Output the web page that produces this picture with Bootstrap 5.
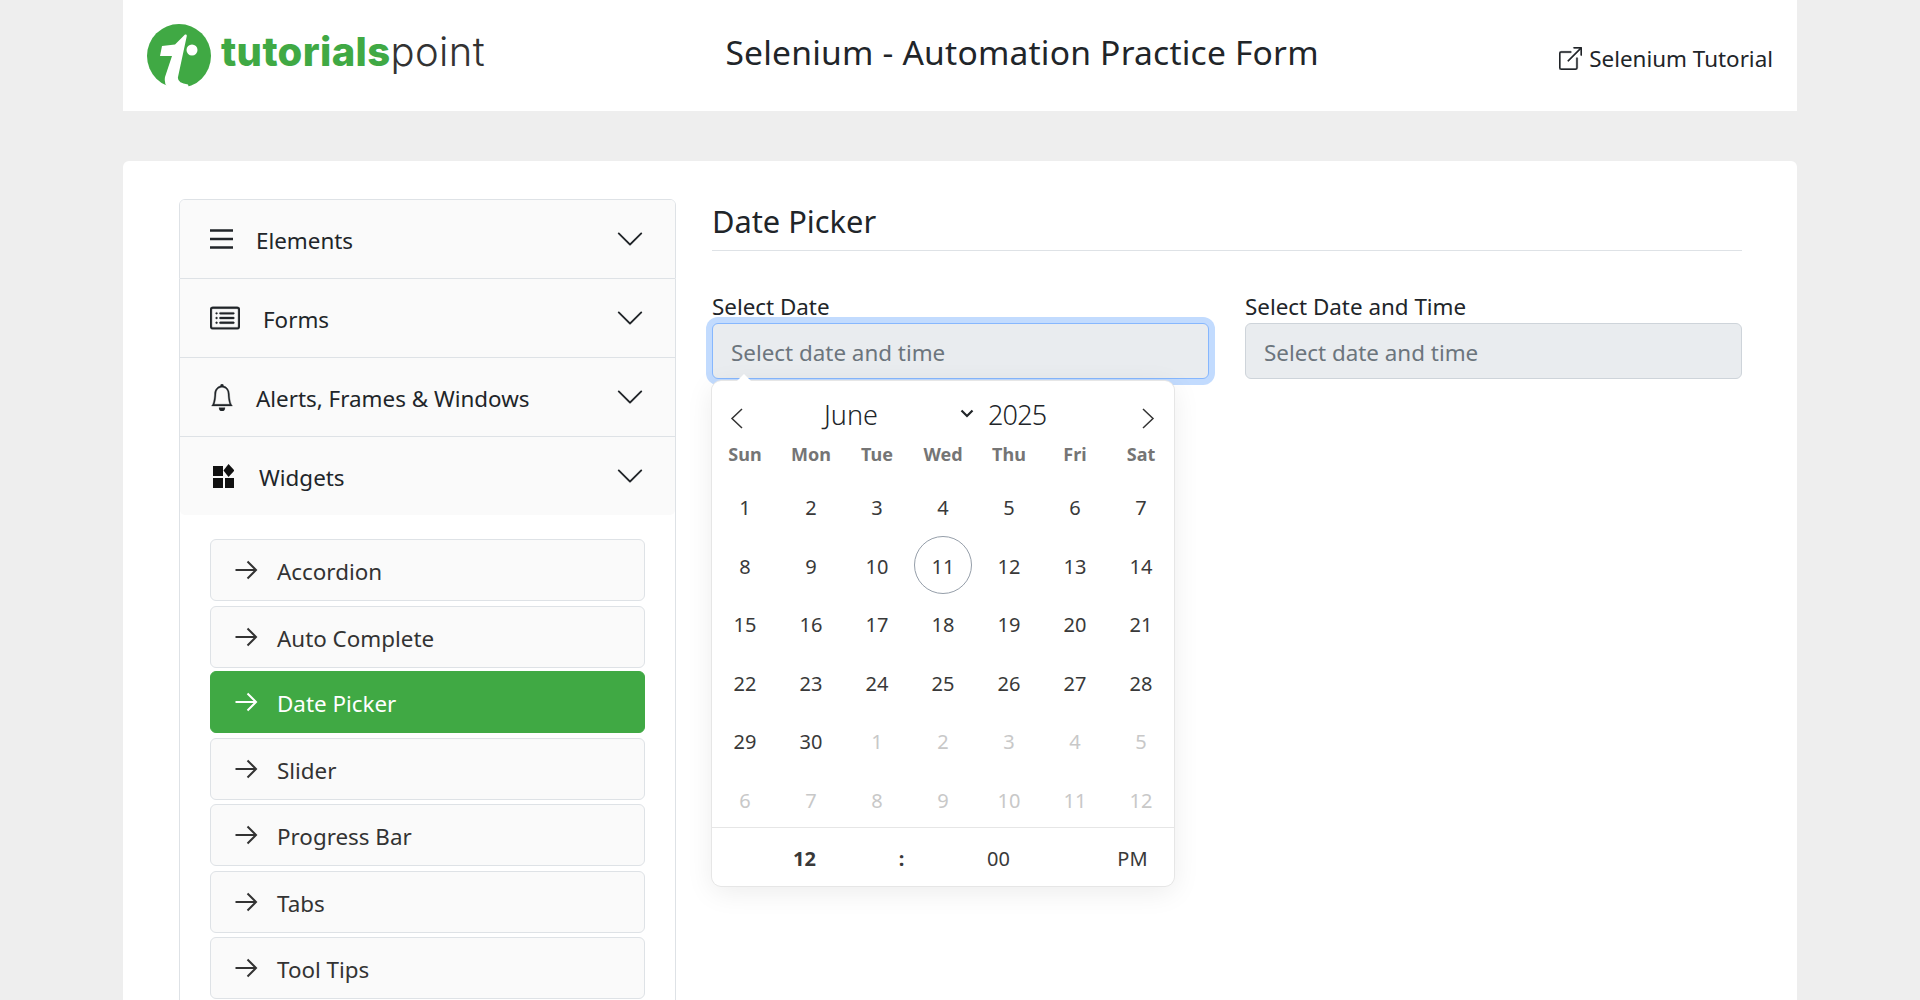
<!doctype html>
<html lang="en"><head><meta charset="utf-8"><title>Selenium - Automation Practice Form</title>
<link href="https://cdn.jsdelivr.net/npm/bootstrap@5.3.0/dist/css/bootstrap.min.css" rel="stylesheet">
<style>
html,body{height:100%;overflow:hidden}
body{background:#eee;font-family:"Noto Sans","Open Sans",sans-serif;color:#212529;font-size:20px}
.shell{width:1674px;margin:0 auto}
.topbar{height:111px;background:#fff;padding:0 24px}
.logo-wrap{gap:10px;height:111px}
.logo-text{font-family:Inter,sans-serif;font-size:40px;line-height:1;letter-spacing:.35px;padding-bottom:8px}
.logo-a{color:#40a944;font-weight:800}.logo-b{color:#333;font-weight:300}
.page-title{font-size:33.6px;margin:0 0 7px;font-weight:400;letter-spacing:.2px}
.ext-link{color:#212529;text-decoration:none;font-size:22.4px;gap:7px;margin-top:6px}
.ext-link svg{stroke:currentColor;stroke-width:.25}
.panel{margin-top:50px;background:#fff;border:0;border-radius:6px 6px 0 0;padding:38px 55px 0 56px;height:839px;overflow:hidden}
.panel-row{--bs-gutter-x:36px}
.side-acc{--bs-accordion-btn-bg:#fafafa;--bs-accordion-active-bg:#fafafa;--bs-accordion-btn-icon-width:30px;--bs-accordion-border-color:#dee2e6;--bs-accordion-border-radius:6px;--bs-accordion-inner-border-radius:5px;--bs-accordion-btn-padding-x:30px;--bs-accordion-btn-padding-y:0;--bs-accordion-body-padding-x:30px;--bs-accordion-body-padding-y:24px}
.side-acc .accordion-button{height:78px;font-size:22.4px;color:#212529;padding-left:30px;box-shadow:none}
.acc-label{padding-top:5px}
.ic-wrap{display:inline-flex;align-items:center}
.ic-wrap svg{stroke:#212529;stroke-width:.2}
.ic-wrap svg.ham{stroke-width:2.4}
.m-el{margin-right:23px}.m-fo{margin-right:23px}.m-wi{margin-right:25px}.m-al{margin-right:22px}
.m-wi svg{stroke:none}
.sub-list{gap:4.5px}
.sub-list .list-group-item{height:62px;background:#fafafa;border:1px solid #dee2e6;border-radius:6px;color:#333;font-size:22.4px;display:flex;align-items:center;padding:4px 0 0 23px;margin:0}
.sub-list .list-group-item.active{background:#40a944;border-color:#40a944;color:#fff}
.sub-list svg{margin:-4px 19px 0 0;flex:none;fill:none;stroke:currentColor;stroke-width:2}
.sec-title{font-size:30.8px;font-weight:400;margin:0;height:51px;line-height:44px}
.sec-rule{height:1px;background:#dee2e6;margin-bottom:43px}
.fld-label{font-size:22.4px;line-height:30px;margin:-2px 0 1px;display:block}
.date-input.form-control{height:56px;background:#e9ecef;border:1px solid #ced4da;border-radius:6px;font-size:22.4px;padding:3px 18px 0;color:#212529}
.date-input.form-control::placeholder{color:#6c757d}
.date-input.is-open{border-color:#86b7fe;box-shadow:0 0 0 6px #c2dbfe}
.picker{position:absolute;left:0;top:2px;width:462px;height:505px;background:#fff;border-radius:9px;box-shadow:1px 0 0 #e6e6e6,-1px 0 0 #e6e6e6,0 1px 0 #e6e6e6,0 -1px 0 #e6e6e6,0 6px 28px rgba(0,0,0,.08);z-index:5}
.picker::before{content:"";position:absolute;left:25px;top:-7px;border:7px solid transparent;border-top:0;border-bottom-color:#fff}
.pick-head{height:64px;position:relative;color:#212529;font-weight:300}
.pick-head span{position:absolute;font-size:27px;line-height:40px;top:14px}
.pick-head svg{position:absolute;top:27px}
.ph-prev{left:18px}.ph-next{right:19px}
.pick-head .ph-mon{left:112px}
.pick-head .ph-yr{left:276px;letter-spacing:-.8px}
.pick-head .ph-down{left:248px;top:28px}
.week,.days{display:grid;grid-template-columns:repeat(7,66px);text-align:center}
.week{height:34px;line-height:1;font-size:18px;font-weight:700;color:#757575}
.days{grid-auto-rows:58.5px;font-size:20px;color:#393939}
.days span{display:flex;align-items:center;justify-content:center;position:relative}
.days .off{color:#c8c8c8}
.days .now::before{content:"";position:absolute;left:4.5px;top:-1.75px;width:58px;height:58px;border:1px solid #959ea9;border-radius:50%}
.time-row{display:grid;grid-template-columns:185px 9px 185px 1fr;height:60px;border-top:1px solid #e6e6e6;margin-top:-3px;padding-top:3px;font-size:20px;color:#393939;text-align:center;align-items:center}
.time-row b{font-weight:700}
</style></head>
<body>
<div class="shell">
<header class="topbar d-flex align-items-center justify-content-between">
  <a class="logo-wrap d-flex align-items-center text-decoration-none" href="#">
    <svg width="64" height="64" viewBox="147 23 64 64" aria-hidden="true"><circle cx="179" cy="55" r="32" fill="#40a944"/><path fill="#fff" d="M162 45 175 43.500 185 33.500Q187 33 186.800 35L178 76Q177 82 188 83.500L190 90H165L167 86Q164 82 165 76L172 55H160Z"/><circle cx="192" cy="49" r="5.500" fill="#fff"/></svg>
    <span class="logo-text"><span class="logo-a">tutorials</span><span class="logo-b">point</span></span>
  </a>
  <h1 class="page-title">Selenium - Automation Practice Form</h1>
  <a class="ext-link d-flex align-items-center" href="#">
    <svg width="23" height="23" viewBox="0 0 16 16" fill="currentColor" aria-hidden="true"><path fill-rule="evenodd" d="M8.636 3.500a.5.5 0 0 0-.5-.5H1.500A1.500 1.500 0 0 0 0 4.500v10A1.500 1.500 0 0 0 1.500 16h10a1.500 1.500 0 0 0 1.500-1.500V7.864a.5.5 0 0 0-1 0V14.500a.5.5 0 0 1-.5.5h-10a.5.5 0 0 1-.5-.5v-10a.5.5 0 0 1 .5-.5h6.636a.5.5 0 0 0 .5-.5z"/><path fill-rule="evenodd" d="M16 .5a.5.5 0 0 0-.5-.5h-5a.5.5 0 0 0 0 1h3.793L6.146 9.146a.5.5 0 1 0 .708.708L15 1.707V5.500a.5.5 0 0 0 1 0v-5z"/></svg>
    <span>Selenium Tutorial</span></a>
</header>
<main class="card panel">
 <div class="row panel-row">
  <div class="col-4">
   <div class="accordion side-acc">
    <div class="accordion-item"><h2 class="accordion-header"><button class="accordion-button collapsed" type="button">
      <span class="ic-wrap m-el"><svg class="ham" width="23" height="20" viewBox="0 0 23 20" aria-hidden="true"><path d="M0 1.500h23M0 10h23M0 18.500h23" fill="none"/></svg></span><span class="acc-label">Elements</span></button></h2></div>
    <div class="accordion-item"><h2 class="accordion-header"><button class="accordion-button collapsed" type="button">
      <span class="ic-wrap m-fo"><svg width="30" height="30" viewBox="0 0 16 16" fill="#212529" aria-hidden="true"><path d="M14.500 3a.5.5 0 0 1 .5.5v9a.5.5 0 0 1-.5.5h-13a.5.5 0 0 1-.5-.5v-9a.5.5 0 0 1 .5-.5h13zm-13-1A1.500 1.500 0 0 0 0 3.500v9A1.500 1.500 0 0 0 1.500 14h13a1.500 1.500 0 0 0 1.500-1.500v-9A1.500 1.500 0 0 0 14.500 2h-13z"/><path d="M5 8a.5.5 0 0 1 .5-.5h7a.5.5 0 0 1 0 1h-7A.5.5 0 0 1 5 8zm0-2.500a.5.5 0 0 1 .5-.5h7a.5.5 0 0 1 0 1h-7a.5.5 0 0 1-.5-.5zm0 5a.5.5 0 0 1 .5-.5h7a.5.5 0 0 1 0 1h-7a.5.5 0 0 1-.5-.5zm-1-5a.5.5 0 1 1-1 0 .5.5 0 0 1 1 0zM4 8a.5.5 0 1 1-1 0 .5.5 0 0 1 1 0zm0 2.500a.5.5 0 1 1-1 0 .5.5 0 0 1 1 0z"/></svg></span><span class="acc-label">Forms</span></button></h2></div>
    <div class="accordion-item"><h2 class="accordion-header"><button class="accordion-button collapsed" type="button">
      <span class="ic-wrap m-al"><svg width="24" height="27" viewBox="0 0 16 16" preserveAspectRatio="none" fill="#212529" aria-hidden="true"><path d="M8 16a2 2 0 0 0 2-2H6a2 2 0 0 0 2 2zM8 1.918l-.797.161A4.002 4.002 0 0 0 4 6c0 .628-.134 2.197-.459 3.742-.16.767-.376 1.566-.663 2.258h10.244c-.287-.692-.502-1.490-.663-2.258C12.134 8.197 12 6.628 12 6a4.002 4.002 0 0 0-3.203-3.920L8 1.917zM14.220 12c.223.447.481.801.78 1H1c.299-.199.557-.553.78-1C2.680 10.200 3 6.880 3 6c0-2.420 1.720-4.440 4.005-4.901a1 1 0 1 1 1.990 0A5.002 5.002 0 0 1 13 6c0 .88.32 4.200 1.220 6z"/></svg></span><span class="acc-label">Alerts, Frames &amp; Windows</span></button></h2></div>
    <div class="accordion-item"><h2 class="accordion-header"><button class="accordion-button collapsed" type="button">
      <span class="ic-wrap m-wi"><svg width="24" height="24" viewBox="0 0 24 24" fill="#111" aria-hidden="true"><rect x="3" y="2" width="10" height="10"/><rect x="3" y="14" width="10" height="10"/><rect x="15" y="14" width="9" height="10"/><path d="M18.500 0 24.500 6.500 18.500 13 13.500 6.500z"/></svg></span><span class="acc-label">Widgets</span></button></h2>
      <div class="accordion-collapse collapse show"><div class="accordion-body">
       <div class="list-group sub-list">
        <a class="list-group-item" href="#"><svg width="24" height="24" viewBox="0 0 24 24"><path d="M1.500 12H22M13.500 3.500 22 12l-8.500 8.500"/></svg>Accordion</a>
        <a class="list-group-item" href="#"><svg width="24" height="24" viewBox="0 0 24 24"><path d="M1.500 12H22M13.500 3.500 22 12l-8.500 8.500"/></svg>Auto Complete</a>
        <a class="list-group-item active" href="#"><svg width="24" height="24" viewBox="0 0 24 24"><path d="M1.500 12H22M13.500 3.500 22 12l-8.500 8.500"/></svg>Date Picker</a>
        <a class="list-group-item" href="#"><svg width="24" height="24" viewBox="0 0 24 24"><path d="M1.500 12H22M13.500 3.500 22 12l-8.500 8.500"/></svg>Slider</a>
        <a class="list-group-item" href="#"><svg width="24" height="24" viewBox="0 0 24 24"><path d="M1.500 12H22M13.500 3.500 22 12l-8.500 8.500"/></svg>Progress Bar</a>
        <a class="list-group-item" href="#"><svg width="24" height="24" viewBox="0 0 24 24"><path d="M1.500 12H22M13.500 3.500 22 12l-8.500 8.500"/></svg>Tabs</a>
        <a class="list-group-item" href="#"><svg width="24" height="24" viewBox="0 0 24 24"><path d="M1.500 12H22M13.500 3.500 22 12l-8.500 8.500"/></svg>Tool Tips</a>
       </div>
      </div></div>
    </div>
   </div>
  </div>
  <div class="col-8">
   <h2 class="sec-title">Date Picker</h2>
   <div class="sec-rule"></div>
   <div class="row panel-row">
    <div class="col-6">
     <label class="fld-label">Select Date</label>
     <input class="form-control date-input is-open" placeholder="Select date and time">
    </div>
    <div class="col-6">
     <label class="fld-label">Select Date and Time</label>
     <input class="form-control date-input" placeholder="Select date and time">
    </div>
   </div>
   <div class="position-relative">
    <div class="picker">
     <div class="pick-head">
      <svg class="ph-prev" width="14" height="21" viewBox="0 0 14 21" aria-hidden="true"><path d="M12 1 2 10.500 12 20" fill="none" stroke="#333" stroke-width="1.500"/></svg>
      <span class="ph-mon">June</span>
      <svg class="ph-down" width="14" height="9" viewBox="0 0 14 9" aria-hidden="true"><path d="M1.500 1.500 7 7l5.500-5.500" fill="none" stroke="#212529" stroke-width="2.200"/></svg>
      <span class="ph-yr">2025</span>
      <svg class="ph-next" width="14" height="21" viewBox="0 0 14 21" aria-hidden="true"><path d="M2 1l10 9.500L2 20" fill="none" stroke="#333" stroke-width="1.500"/></svg>
     </div>
     <div class="week"><span>Sun</span><span>Mon</span><span>Tue</span><span>Wed</span><span>Thu</span><span>Fri</span><span>Sat</span></div>
     <div class="days">
      <span>1</span><span>2</span><span>3</span><span>4</span><span>5</span><span>6</span><span>7</span>
      <span>8</span><span>9</span><span>10</span><span class="now">11</span><span>12</span><span>13</span><span>14</span>
      <span>15</span><span>16</span><span>17</span><span>18</span><span>19</span><span>20</span><span>21</span>
      <span>22</span><span>23</span><span>24</span><span>25</span><span>26</span><span>27</span><span>28</span>
      <span>29</span><span>30</span><span class="off">1</span><span class="off">2</span><span class="off">3</span><span class="off">4</span><span class="off">5</span>
      <span class="off">6</span><span class="off">7</span><span class="off">8</span><span class="off">9</span><span class="off">10</span><span class="off">11</span><span class="off">12</span>
     </div>
     <div class="time-row"><b>12</b><b>:</b><span>00</span><span>PM</span></div>
    </div>
   </div>
  </div>
 </div>
</main>
</div>
<script src="https://cdn.jsdelivr.net/npm/bootstrap@5.3.0/dist/js/bootstrap.bundle.min.js"></script>
</body></html>
